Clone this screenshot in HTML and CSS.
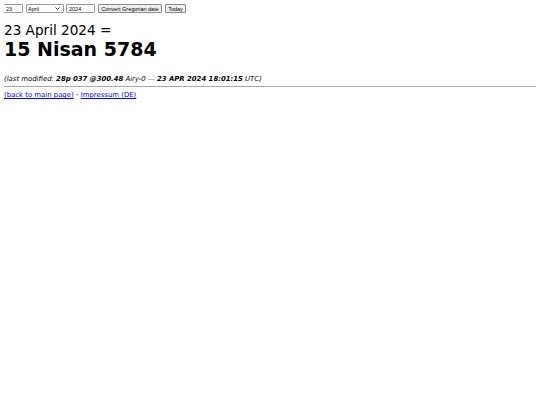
FILE: index.html
```html
<!DOCTYPE html>
<html>
<head>
<meta charset="utf-8">
<link rel="stylesheet" href="styles.css">
</head>
<body>
<form class="conv">
<input class="day" type="text" value="23">
<span class="sel-wrap">
<select class="month"><option>January</option><option>February</option><option>March</option><option selected>April</option><option>May</option><option>June</option><option>July</option><option>August</option><option>September</option><option>October</option><option>November</option><option>December</option></select>
<svg class="chev" width="5" height="3" viewBox="0 0 5 3"><path d="M0.5 0.5 L2.5 2.5 L4.5 0.5" fill="none" stroke="#333" stroke-width="0.9"/></svg>
</span>
<input class="year" type="text" value="2024">
<button class="btn conv-btn" type="button">Convert Gregorian date</button>
<button class="btn today" type="button">Today</button>
</form>
<div class="result">
<div class="greg">23 April 2024 =</div>
<div class="hebr">15 Nisan 5784</div>
</div>
<p class="mod">(last modified: <b>28p 037 @300.48</b> Airy-0 — <b>23 APR 2024 18:01:15</b> UTC)</p>
<hr class="rule">
<p class="links"><a href="#">(back to main page)</a> <span class="sep">·</span> <a href="#">Impressum (DE)</a></p>
</body>
</html>
```
FILE: styles.css
```css
html, body { background: #fff; }
body {
  margin: 4px;
  font-family: "DejaVu Sans", Verdana, sans-serif;
  color: #000;
}
.conv {
  display: flex;
  align-items: center;
  margin: 0 0 0 -1px;
  height: 9px;
}
.conv input, .conv select, .conv .btn {
  font-family: "Liberation Sans", Arial, sans-serif;
  font-size: 5.5px;
  height: 9px;
  box-sizing: border-box;
  margin: 0;
  padding: 0 2px;
  border: 1px solid #9a9a9a;
  border-radius: 1px;
  background: #fff;
  color: #000;
}
.conv .day { width: 20px; margin-right: 3px; }
.sel-wrap { position: relative; display: block; height: 9px; margin-right: 2px; }
.conv .month {
  width: 38px;
  padding: 0 1px;
  appearance: none;
  -webkit-appearance: none;
  display: block;
}
.chev { position: absolute; right: 4px; top: 3px; }
.conv .year { width: 29px; margin-right: 3px; }
.conv .btn { background: #efefef; border-color: #8a8a8a; padding: 0 2px; }
.conv .conv-btn { width: 64px; margin-right: 3px; }
.conv .today { width: 21px; }
.result { margin-top: 9px; }
.greg { font-size: 13.6px; line-height: 16px; }
.hebr { font-size: 19px; font-weight: bold; line-height: 22px; }
.mod {
  font-style: italic;
  font-size: 6.9px;
  margin: 15px 0 3px;
}
.rule {
  margin: 0;
  border: 0;
  border-top: 1px solid #aaa;
}
.links {
  font-size: 6.9px;
  margin: 4px 0 0;
}
.links a { color: #00e; }
.sep { color: #666; font-weight: bold; }
```
